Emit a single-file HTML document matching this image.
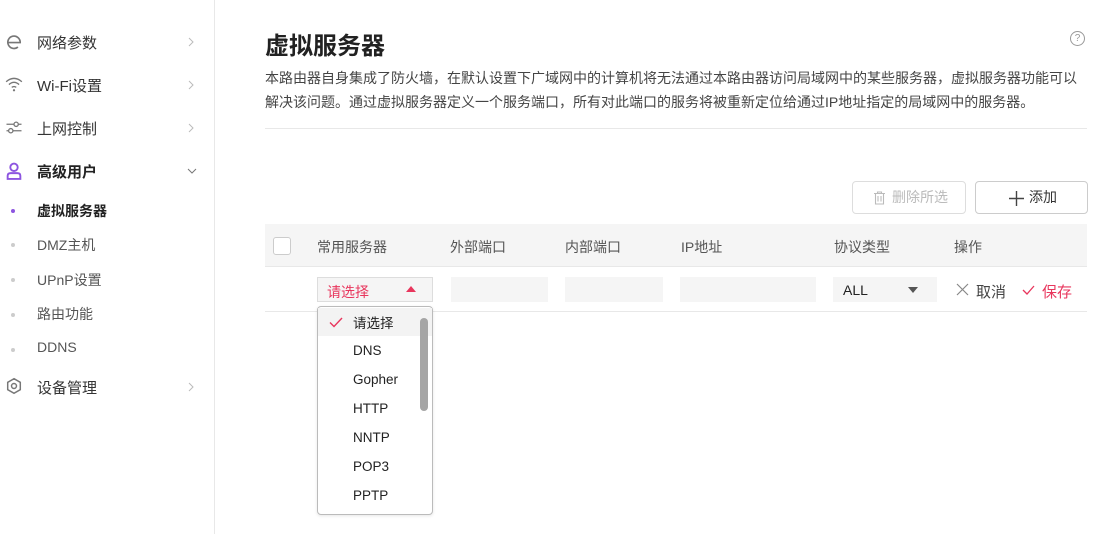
<!DOCTYPE html>
<html><head><meta charset="utf-8"><style>
*{margin:0;padding:0;box-sizing:border-box}
body{width:1106px;height:534px;background:#fff;font-family:"Liberation Sans","Noto Sans CJK SC",sans-serif;color:#333;position:relative;overflow:hidden}
.a{position:absolute;white-space:nowrap}
.side{position:absolute;left:0;top:0;width:215px;height:534px;border-right:1px solid #e8e8e8}
.m{position:absolute;left:37px;font-size:15px;color:#333}
.chev{position:absolute;left:188px}
.dot{position:absolute;left:11px;width:4px;height:4px;border-radius:2px;background:#ccc}
.s{position:absolute;left:37px;font-size:14px;color:#555}
.red{color:#e8365d}
.inp{position:absolute;top:277px;height:25px;background:#f5f5f5}
.opt{position:absolute;left:35px;font-size:13.5px;color:#222}
</style></head><body>
<div class="side">
<svg class="a" style="left:5px;top:33px" width="18" height="18" viewBox="0 0 16 16"><path d="M2.5 8.5H13.5A5.5 5.5 0 1 0 11.5 12.5" fill="none" stroke="#777" stroke-width="1.5"/></svg>
<div class="m" style="top:32px">网络参数</div>
<svg class="chev" style="top:37px" width="6" height="10" viewBox="0 0 6 10"><path d="M1 1L5 5L1 9" fill="none" stroke="#bbb" stroke-width="1"/></svg>
<svg class="a" style="left:5px;top:76px" width="18" height="16" viewBox="0 0 16 14"><path d="M1 5Q8 -1 15 5M3.5 7.5Q8 3.5 12.5 7.5M6 10Q8 8.5 10 10" fill="none" stroke="#777" stroke-width="1.2"/><circle cx="8" cy="12.5" r="1" fill="#777"/></svg>
<div class="m" style="top:75px">Wi-Fi设置</div>
<svg class="chev" style="top:80px" width="6" height="10" viewBox="0 0 6 10"><path d="M1 1L5 5L1 9" fill="none" stroke="#bbb" stroke-width="1"/></svg>
<svg class="a" style="left:5px;top:120px" width="18" height="15" viewBox="0 0 16 14"><path d="M1 4H15M1 10H15" stroke="#777" stroke-width="1.2"/><circle cx="10" cy="4" r="2" fill="#fff" stroke="#777" stroke-width="1.2"/><circle cx="5" cy="10" r="2" fill="#fff" stroke="#777" stroke-width="1.2"/></svg>
<div class="m" style="top:118px">上网控制</div>
<svg class="chev" style="top:123px" width="6" height="10" viewBox="0 0 6 10"><path d="M1 1L5 5L1 9" fill="none" stroke="#bbb" stroke-width="1"/></svg>
<svg class="a" style="left:5px;top:162px" width="18" height="18" viewBox="0 0 16 17"><circle cx="8" cy="5" r="3.5" fill="none" stroke="#8d55e0" stroke-width="1.8"/><path d="M2 16V13Q2 10.5 5 10.5H11Q14 10.5 14 13V16Z" fill="none" stroke="#8d55e0" stroke-width="1.8"/></svg>
<div class="m" style="top:161px;font-weight:bold;color:#222">高级用户</div>
<svg class="a" style="left:187px;top:168px" width="10" height="6" viewBox="0 0 10 6"><path d="M1 1L5 5L9 1" fill="none" stroke="#777" stroke-width="1"/></svg>
<div class="dot" style="top:209px;background:#8d55e0"></div><div class="s" style="top:201px;font-weight:bold;color:#222">虚拟服务器</div>
<div class="dot" style="top:243px"></div><div class="s" style="top:235px">DMZ主机</div>
<div class="dot" style="top:278px"></div><div class="s" style="top:270px">UPnP设置</div>
<div class="dot" style="top:313px"></div><div class="s" style="top:304px">路由功能</div>
<div class="dot" style="top:348px"></div><div class="s" style="top:339px">DDNS</div>
<svg class="a" style="left:5px;top:377px" width="18" height="18" viewBox="0 0 16 16"><path d="M8 1.5L13.6 4.75V11.25L8 14.5L2.4 11.25V4.75Z" fill="none" stroke="#777" stroke-width="1.3"/><circle cx="8" cy="8" r="2.2" fill="none" stroke="#777" stroke-width="1.3"/></svg>
<div class="m" style="top:377px">设备管理</div>
<svg class="chev" style="top:382px" width="6" height="10" viewBox="0 0 6 10"><path d="M1 1L5 5L1 9" fill="none" stroke="#bbb" stroke-width="1"/></svg>
</div>
<div class="a" style="left:265px;top:26px;font-size:24px;font-weight:bold;color:#222">虚拟服务器</div>
<div class="a" style="left:1070px;top:31px;width:15px;height:15px;border:1px solid #999;border-radius:50%;font-size:10px;color:#999;text-align:center;line-height:13px">?</div>
<div class="a" style="left:265px;top:66px;font-size:14px;line-height:24px;color:#444">本路由器自身集成了防火墙，在默认设置下广域网中的计算机将无法通过本路由器访问局域网中的某些服务器，虚拟服务器功能可以<br>解决该问题。通过虚拟服务器定义一个服务端口，所有对此端口的服务将被重新定位给通过IP地址指定的局域网中的服务器。</div>
<div class="a" style="left:265px;top:128px;width:822px;height:1px;background:#e8e8e8"></div>
<div class="a" style="left:852px;top:181px;width:114px;height:33px;border:1px solid #ddd;border-radius:4px;color:#bbb;font-size:14px;line-height:31px;padding-left:20px">
<svg style="position:absolute;left:20px;top:9px" width="13" height="14" viewBox="0 0 13 14"><path d="M1 2.5H12M4.5 2.5V1H8.5V2.5M2.5 2.5V13H10.5V2.5M5 5V10.5M8 5V10.5" fill="none" stroke="#bbb" stroke-width="1.1"/></svg>
<span style="position:absolute;left:39px">删除所选</span></div>
<div class="a" style="left:975px;top:181px;width:113px;height:33px;border:1px solid #ccc;border-radius:4px;color:#333;font-size:14px;line-height:31px">
<svg style="position:absolute;left:33px;top:9px" width="15" height="15" viewBox="0 0 15 15"><path d="M7.5 0V15M0 7.5H15" stroke="#444" stroke-width="1.4"/></svg>
<span style="position:absolute;left:53px">添加</span></div>
<div class="a" style="left:265px;top:224px;width:822px;height:43px;background:#f5f5f5;border-bottom:1px solid #e8e8e8"></div>
<div class="a" style="left:273px;top:237px;width:18px;height:18px;border:1px solid #ccc;border-radius:3px;background:#fff"></div>
<div class="a" style="left:317px;top:237px;font-size:14px;color:#555">常用服务器</div>
<div class="a" style="left:450px;top:237px;font-size:14px;color:#555">外部端口</div>
<div class="a" style="left:565px;top:237px;font-size:14px;color:#555">内部端口</div>
<div class="a" style="left:681px;top:237px;font-size:14px;color:#555">IP地址</div>
<div class="a" style="left:834px;top:237px;font-size:14px;color:#555">协议类型</div>
<div class="a" style="left:954px;top:237px;font-size:14px;color:#555">操作</div>
<div class="a" style="left:265px;top:311px;width:822px;height:1px;background:#e8e8e8"></div>
<div class="a" style="left:317px;top:277px;width:116px;height:25px;border:1px solid #ddd;background:#f5f5f5"></div>
<div class="a red" style="left:327px;top:282px;font-size:14px">请选择</div>
<div class="a" style="left:406px;top:286px;width:0;height:0;border-left:5px solid transparent;border-right:5px solid transparent;border-bottom:6px solid #e8365d"></div>
<div class="inp" style="left:451px;width:97px"></div>
<div class="inp" style="left:565px;width:98px"></div>
<div class="inp" style="left:680px;width:136px"></div>
<div class="inp" style="left:833px;width:104px"></div>
<div class="a" style="left:843px;top:282px;font-size:14px;color:#222">ALL</div>
<div class="a" style="left:908px;top:287px;width:0;height:0;border-left:5px solid transparent;border-right:5px solid transparent;border-top:6px solid #555"></div>
<svg class="a" style="left:956px;top:283px" width="13" height="13" viewBox="0 0 13 13"><path d="M1 1L12 12M12 1L1 12" stroke="#888" stroke-width="1.2"/></svg>
<div class="a" style="left:976px;top:281px;font-size:15px;color:#444">取消</div>
<svg class="a" style="left:1022px;top:285px" width="13" height="10" viewBox="0 0 13 10"><path d="M1 5L5 9L12 1" fill="none" stroke="#e8365d" stroke-width="1.3"/></svg>
<div class="a red" style="left:1042px;top:281px;font-size:15px">保存</div>
<div class="a" style="left:317px;top:306px;width:116px;height:209px;border:1px solid #bbb;border-radius:4px;background:#fff;box-shadow:0 1px 3px rgba(0,0,0,.1)">
<div class="a" style="left:0;top:1px;width:114px;height:28px;background:#f3f3f3"></div>
<svg class="a" style="left:11px;top:10px" width="14" height="11" viewBox="0 0 14 11"><path d="M1 5.5L5 9.5L13 1" fill="none" stroke="#e8365d" stroke-width="1.4"/></svg>
<div class="opt red" style="top:5px">请选择</div>
<div class="opt" style="top:36px">DNS</div>
<div class="opt" style="top:65px">Gopher</div>
<div class="opt" style="top:94px">HTTP</div>
<div class="opt" style="top:123px">NNTP</div>
<div class="opt" style="top:152px">POP3</div>
<div class="opt" style="top:181px">PPTP</div>
<div class="a" style="left:102px;top:11px;width:8px;height:93px;border-radius:4px;background:#a5a5a5"></div>
</div>
</body></html>
